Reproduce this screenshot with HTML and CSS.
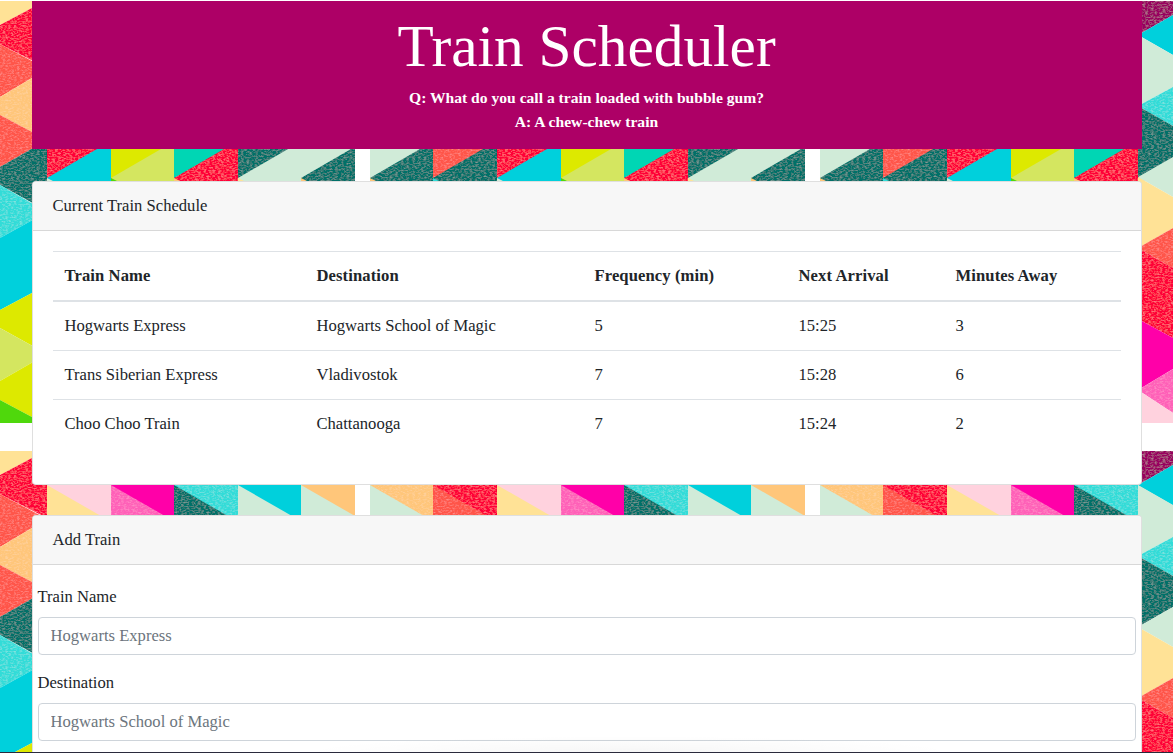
FILE: index.html
```html
<!DOCTYPE html>
<html lang="en">
<head>
<meta charset="utf-8">
<title>Train Scheduler</title>
<link rel="stylesheet" href="styles.css">
</head>
<body>
<svg class="backdrop" width="1173" height="753" viewBox="0 0 1173 753" aria-hidden="true">
  <defs>
    <filter id="grain" x="0" y="0" width="100%" height="100%">
      <feTurbulence type="fractalNoise" baseFrequency="0.35 0.7" numOctaves="3" seed="4" result="n"/>
      <feColorMatrix in="n" type="matrix" values="0 0 0 0 1  0 0 0 0 1  0 0 0 0 1  0.45 0 0 0 -0.2" result="speck"/>
      <feComposite in="speck" in2="SourceGraphic" operator="in" result="clip"/>
      <feMerge><feMergeNode in="SourceGraphic"/><feMergeNode in="clip"/></feMerge>
    </filter>
    <g id="left-col">
      <polygon class="lyellow" points="0,0 47,0 0,25"/>
      <polygon class="red tex" points="0,25 47,0 47,68 0,44"/>
      <polygon class="coral tex" points="0,44 47,69 0,97"/>
      <polygon class="lorange tex" points="0,97 47,69 47,140 0,115"/>
      <polygon class="coral tex" points="0,115 47,140 0,167"/>
      <polygon class="dteal tex" points="0,167 47,140 47,211 0,185"/>
      <polygon class="lcyan tex" points="0,185 47,212 0,238"/>
      <polygon class="cyan" points="0,238 47,212 47,285 0,310"/>
      <polygon class="yellow" points="0,310 47,285 47,354 0,328"/>
      <polygon class="lime" points="0,328 47,354 0,381"/>
      <polygon class="yellow" points="0,381 47,354 47,425 0,400"/>
      <polygon class="green" points="0,400 47,425 0,425"/>
    </g>
    <g id="right-col">
      <polygon class="dmagenta tex" points="1138,0 1173,0 1173,15 1138,35"/>
      <polygon class="cyan" points="1138,35 1173,15 1173,55"/>
      <polygon class="lgreen" points="1138,35 1173,55 1173,87 1138,106"/>
      <polygon class="lcyan tex" points="1138,106 1173,87 1173,126"/>
      <polygon class="dteal tex" points="1138,106 1173,126 1173,157 1138,177"/>
      <polygon class="lgreen" points="1138,177 1173,157 1173,197"/>
      <polygon class="lyellow" points="1138,177 1173,197 1173,228 1138,248"/>
      <polygon class="coral tex" points="1138,248 1173,228 1173,268"/>
      <polygon class="red tex" points="1138,248 1173,268 1173,338 1138,319"/>
      <polygon class="magenta" points="1138,319 1173,338 1173,369 1138,390"/>
      <polygon class="pink tex" points="1138,390 1173,369 1173,413"/>
      <polygon class="lpink" points="1138,390 1173,413 1173,425 1138,425"/>
    </g>
    <g id="top-tile">
      <rect class="red tex" x="0" y="0" width="64" height="32"/>
      <polygon class="cyan" points="0,29 50,0 64,0 64,32 0,32"/>
      <polygon class="lgreen" points="0,29 6,32 0,32"/>
      <rect class="yellow" x="64" y="0" width="63" height="32"/>
      <polygon class="lime" points="64,29 114,0 127,0 127,32 64,32"/>
      <polygon class="green" points="64,29 70,32 64,32"/>
      <rect class="mint" x="127" y="0" width="64" height="32"/>
      <polygon class="red tex" points="127,29 177,0 191,0 191,32 127,32"/>
      <polygon class="lorange" points="127,29 133,32 127,32"/>
      <rect class="dteal tex" x="191" y="0" width="63" height="32"/>
      <polygon class="lgreen" points="191,29 241,0 254,0 254,32 191,32"/>
      <polygon class="lyellow" points="191,29 197,32 191,32"/>
      <rect class="lgreen" x="254" y="0" width="54" height="32"/>
      <polygon class="dteal tex" points="254,29 304,0 308,0 308,32 254,32"/>
      <polygon class="lorange" points="254,29 260,32 254,32"/>
      <rect class="lgreen" x="323" y="0" width="63" height="32"/>
      <polygon class="dteal tex" points="323,29 373,0 386,0 386,32 323,32"/>
      <polygon class="lorange" points="323,29 329,32 323,32"/>
      <rect class="coral tex" x="386" y="0" width="64" height="32"/>
      <polygon class="dteal tex" points="386,29 436,0 450,0 450,32 386,32"/>
      <polygon class="lcyan" points="386,29 392,32 386,32"/>
    </g>
    <g id="bottom-tile">
      <rect class="lpink" x="0" y="0" width="64" height="31"/>
      <polygon class="lyellow" points="0,0 54,31 0,31"/>
      <rect class="magenta" x="64" y="0" width="63" height="31"/>
      <polygon class="pink tex" points="64,0 118,31 64,31"/>
      <rect class="lcyan tex" x="127" y="0" width="64" height="31"/>
      <polygon class="dteal tex" points="127,0 181,31 127,31"/>
      <rect class="cyan" x="191" y="0" width="63" height="31"/>
      <polygon class="lgreen" points="191,0 245,31 191,31"/>
      <rect class="lorange" x="254" y="0" width="54" height="31"/>
      <polygon class="lgreen" points="254,0 308,31 254,31"/>
      <rect class="lorange tex" x="323" y="0" width="63" height="31"/>
      <polygon class="lgreen" points="323,0 377,31 323,31"/>
      <rect class="red tex" x="386" y="0" width="64" height="31"/>
      <polygon class="coral tex" points="386,0 440,31 386,31"/>
    </g>
  </defs>
  <use href="#left-col"/>
  <use href="#left-col" y="450"/>
  <use href="#top-tile" x="47" y="149"/>
  <use href="#top-tile" x="497" y="149"/>
  <use href="#top-tile" x="947" y="149"/>
  <use href="#bottom-tile" x="47" y="485"/>
  <use href="#bottom-tile" x="497" y="485"/>
  <use href="#bottom-tile" x="947" y="485"/>
  <use href="#right-col"/>
  <use href="#right-col" y="450"/>
  <rect class="white" x="0" y="0" width="1173" height="1"/>
  <rect class="white" x="0" y="423" width="1173" height="28"/>
</svg>

<div class="container">
  <header class="banner">
    <h1 class="banner-title">Train Scheduler</h1>
    <p class="banner-line">Q: What do you call a train loaded with bubble gum?</p>
    <p class="banner-line">A: A chew-chew train</p>
  </header>

  <section class="card">
    <div class="card-header">Current Train Schedule</div>
    <div class="card-body">
      <table class="schedule">
        <thead>
          <tr>
            <th>Train Name</th>
            <th>Destination</th>
            <th>Frequency (min)</th>
            <th>Next Arrival</th>
            <th>Minutes Away</th>
          </tr>
        </thead>
        <tbody>
          <tr><td>Hogwarts Express</td><td>Hogwarts School of Magic</td><td>5</td><td>15:25</td><td>3</td></tr>
          <tr><td>Trans Siberian Express</td><td>Vladivostok</td><td>7</td><td>15:28</td><td>6</td></tr>
          <tr><td>Choo Choo Train</td><td>Chattanooga</td><td>7</td><td>15:24</td><td>2</td></tr>
        </tbody>
      </table>
    </div>
  </section>

  <section class="card">
    <div class="card-header">Add Train</div>
    <form class="train-form">
      <div class="form-group">
        <label class="form-label" for="train-name">Train Name</label>
        <input class="form-input" id="train-name" type="text" placeholder="Hogwarts Express">
      </div>
      <div class="form-group">
        <label class="form-label" for="destination">Destination</label>
        <input class="form-input" id="destination" type="text" placeholder="Hogwarts School of Magic">
      </div>
    </form>
  </section>
</div>
<div class="dock-shadow"></div>
<div class="screen-edge"></div>
</body>
</html>
```

FILE: styles.css
```css
* { box-sizing: border-box; }

html, body {
  margin: 0;
  height: 753px;
  overflow: hidden;
}

body {
  position: relative;
  font-family: "Liberation Serif", serif;
  font-size: 16.6px;
  line-height: 24px;
  color: #212529;
  background: #fff;
}

.backdrop {
  position: absolute;
  top: 0;
  left: 0;
  z-index: -1;
  display: block;
}

.tex { filter: url(#grain); }
.red { fill: #ff0038; }
.coral { fill: #ff5548; }
.lorange { fill: #ffc67a; }
.lyellow { fill: #ffe296; }
.dteal { fill: #007068; }
.lcyan { fill: #30dcd8; }
.cyan { fill: #00d0dc; }
.yellow { fill: #dde900; }
.lime { fill: #d4e660; }
.green { fill: #4fd80c; }
.lgreen { fill: #d0ebd8; }
.mint { fill: #00d6b4; }
.magenta { fill: #ff00a8; }
.pink { fill: #ff60b8; }
.lpink { fill: #ffd2de; }
.dmagenta { fill: #980060; }
.white { fill: #fff; }

.container {
  width: 1140px;
  height: 752px;
  margin: 0 auto;
  padding: 1px 15px 0;
  overflow: hidden;
}

.banner {
  height: 148px;
  margin-bottom: 32px;
  padding-top: 13px;
  background: #ad0066;
  color: #fff;
  text-align: center;
}

.banner-title {
  margin: 0 0 8px;
  font-size: 59.3px;
  font-weight: 400;
  line-height: 64px;
}

.banner-line {
  margin: 0;
  font-weight: 700;
  font-size: 15.6px;
}

.card {
  margin-bottom: 30px;
  background: #fff;
  border: 1px solid rgba(0, 0, 0, .125);
  border-radius: 4px;
}

.card-header {
  padding: 12px 20px;
  background: #f7f7f7;
  border-bottom: 1px solid rgba(0, 0, 0, .125);
  border-radius: 3px 3px 0 0;
}

.card-body { padding: 20px; }

.schedule {
  width: 100%;
  margin-bottom: 16px;
  border-collapse: collapse;
  table-layout: fixed;
}

.schedule th,
.schedule td {
  padding: 12px;
  text-align: left;
  border-top: 1px solid #dee2e6;
}

.schedule th {
  font-weight: 700;
  letter-spacing: .1px;
  border-bottom: 2px solid #dee2e6;
}

.schedule th:nth-child(1) { width: 252px; }
.schedule th:nth-child(2) { width: 278px; }
.schedule th:nth-child(3) { width: 204px; }
.schedule th:nth-child(4) { width: 157px; }

.train-form { padding: 20px 5px; }

.form-group { margin-bottom: 16px; }

.form-label {
  display: block;
  margin-bottom: 8px;
}

.form-input {
  display: block;
  width: 100%;
  height: 38px;
  padding: 6px 12px;
  font: inherit;
  color: #495057;
  background: #fff;
  border: 1px solid #ced4da;
  border-radius: 4px;
}

.form-input::placeholder {
  color: #6c757d;
  opacity: 1;
}

.dock-shadow {
  position: absolute;
  left: 300px;
  bottom: 1px;
  width: 660px;
  height: 16px;
  background: radial-gradient(ellipse 50% 100% at 50% 100%, rgba(0, 0, 0, .035), rgba(0, 0, 0, 0));
}

.screen-edge {
  position: absolute;
  left: 0;
  right: 0;
  bottom: 0;
  height: 1px;
  background: #2a2a3c;
}
```
